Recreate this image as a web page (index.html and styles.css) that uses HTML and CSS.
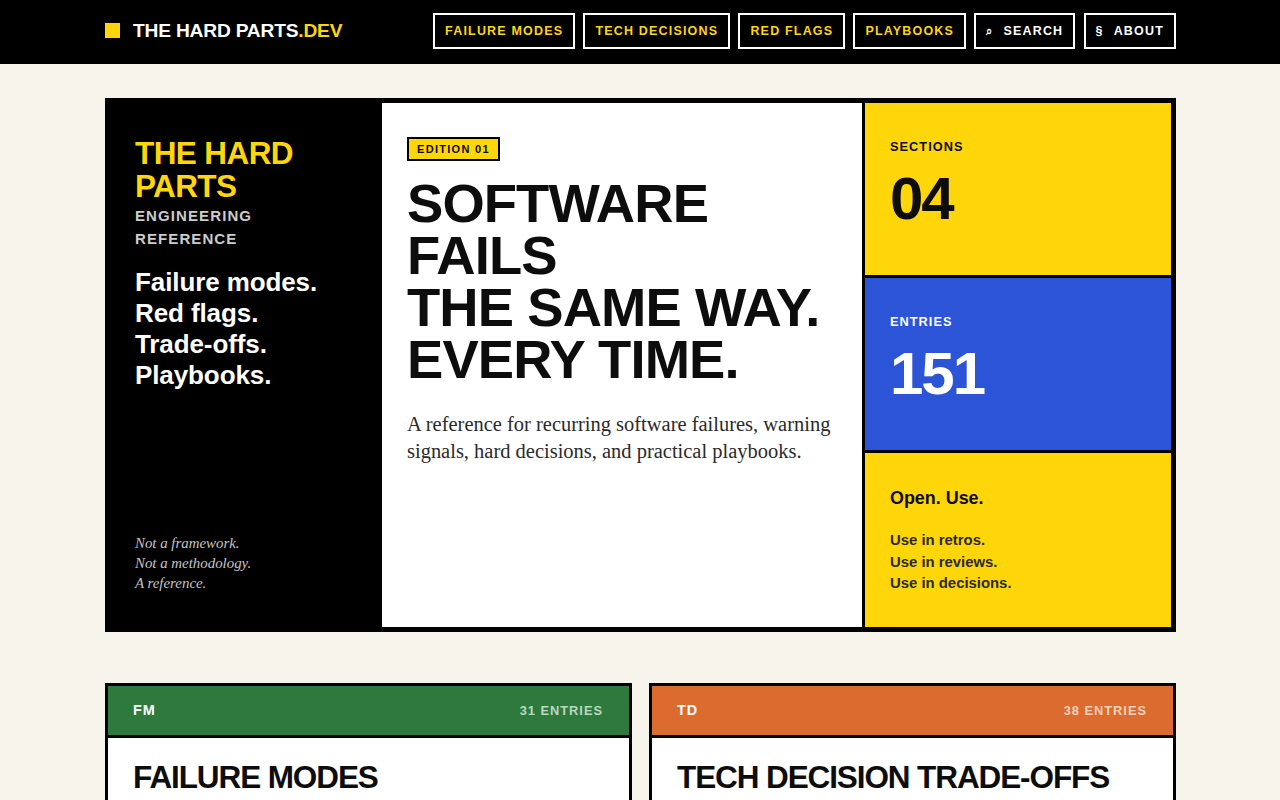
FILE: index.html
```html
<!DOCTYPE html>
<html lang="en">
<head>
    <meta charset="UTF-8">
    <title>The Hard Parts.dev</title>
    <link rel="stylesheet" href="styles.css">
</head>
<body>
    <header class="topbar">
        <div class="topbar-inner">
            <a class="brand" href="#"><span class="brand-mark"></span>THE HARD PARTS<span class="brand-dev">.DEV</span></a>
            <nav class="nav">
                <a class="nav-link" href="#">FAILURE MODES</a>
                <a class="nav-link" href="#">TECH DECISIONS</a>
                <a class="nav-link" href="#">RED FLAGS</a>
                <a class="nav-link" href="#">PLAYBOOKS</a>
                <a class="nav-link nav-plain" href="#"><span class="nav-icon search-icon">⌕</span>SEARCH</a>
                <a class="nav-link nav-plain" href="#"><span class="nav-icon">§</span>ABOUT</a>
            </nav>
        </div>
    </header>

    <main class="page">
        <section class="hero">
            <div class="hero-side">
                <div>
                    <h2 class="side-title">THE HARD PARTS</h2>
                    <p class="side-sub">ENGINEERING REFERENCE</p>
                    <p class="side-list">Failure modes.<br>Red flags.<br>Trade-offs.<br>Playbooks.</p>
                </div>
                <p class="side-note">Not a framework.<br>Not a methodology.<br>A reference.</p>
            </div>

            <div class="hero-main">
                <span class="edition">EDITION 01</span>
                <h1 class="headline">SOFTWARE FAILS<br>THE SAME WAY.<br>EVERY TIME.</h1>
                <p class="lede">A reference for recurring software failures, warning signals, hard decisions, and practical playbooks.</p>
            </div>

            <div class="hero-stats">
                <div class="stat stat-yellow">
                    <div class="stat-label">SECTIONS</div>
                    <div class="stat-num">04</div>
                </div>
                <div class="stat stat-blue">
                    <div class="stat-label">ENTRIES</div>
                    <div class="stat-num">151</div>
                </div>
                <div class="stat stat-yellow">
                    <div class="stat-open">Open. Use.</div>
                    <p class="stat-uses">Use in retros.<br>Use in reviews.<br>Use in decisions.</p>
                </div>
            </div>
        </section>

        <section class="cards">
            <article class="card">
                <div class="card-head card-green">
                    <span class="card-code">FM</span>
                    <span class="card-count">31 ENTRIES</span>
                </div>
                <div class="card-body">
                    <h3 class="card-title">FAILURE MODES</h3>
                </div>
            </article>
            <article class="card">
                <div class="card-head card-orange">
                    <span class="card-code">TD</span>
                    <span class="card-count">38 ENTRIES</span>
                </div>
                <div class="card-body">
                    <h3 class="card-title">TECH DECISION TRADE-OFFS</h3>
                </div>
            </article>
        </section>
    </main>
</body>
</html>
```

FILE: styles.css
```css
* {
    box-sizing: border-box;
}

body {
    margin: 0;
    background-color: #f7f4ec;
    color: #0d0d0d;
    font-family: "Liberation Sans", Arial, sans-serif;
}

a {
    text-decoration: none;
}

/* Top bar */
.topbar {
    background-color: #000;
    height: 64px;
}

.topbar-inner {
    display: flex;
    justify-content: space-between;
    align-items: center;
    height: 62px;
    margin-left: 105px;
    width: 1071px;
}

.brand {
    display: flex;
    align-items: center;
    color: #fff;
    font-size: 19.2px;
    font-weight: bold;
    letter-spacing: -0.2px;
}

.brand-mark {
    width: 15px;
    height: 15px;
    margin: 0 13px 1px 0;
    background-color: #ffd60a;
}

.brand-dev {
    color: #ffd60a;
}

.nav {
    display: flex;
    gap: 8.2px;
}

.nav-link {
    display: flex;
    align-items: center;
    height: 36px;
    padding: 0 10px;
    border: 2px solid #fff;
    color: #ffd60a;
    font-size: 12.48px;
    font-weight: bold;
    letter-spacing: 1.2px;
}

.nav-plain {
    color: #fff;
}

.nav-icon {
    margin-right: 10px;
}

.search-icon {
    font-size: 11px;
}

/* Hero */
.page {
    margin-left: 105px;
    width: 1071px;
    padding-top: 34px;
}

.hero {
    display: grid;
    grid-template-columns: 272px 483px 306px;
    height: 534px;
    border: 5px solid #000;
    background-color: #000;
}

.hero-side {
    display: flex;
    flex-direction: column;
    justify-content: space-between;
    padding: 34px 25px;
    background-color: #000;
    color: #fff;
}

.side-title {
    margin: 0;
    color: #ffd60a;
    font-size: 31.5px;
    line-height: 33px;
    letter-spacing: -0.6px;
}

.side-sub {
    margin: 0;
    padding-top: 1px;
    color: #ccc;
    font-size: 15px;
    font-weight: bold;
    line-height: 23px;
    letter-spacing: 1.1px;
}

.side-list {
    margin: 17px 0 0;
    font-size: 26px;
    font-weight: bold;
    line-height: 31px;
    letter-spacing: -0.1px;
}

.side-note {
    margin: 0;
    color: #c4c4c4;
    font-family: "Liberation Serif", serif;
    font-size: 14.88px;
    font-style: italic;
    line-height: 20px;
}

.hero-main {
    padding: 34px 25px;
    background-color: #fff;
    border-right: 3px solid #000;
}

.edition {
    display: inline-block;
    padding: 4px 8px;
    border: 2px solid #000;
    background-color: #ffd60a;
    font-size: 11px;
    font-weight: bold;
    letter-spacing: 1.3px;
}

.headline {
    margin: 17px 0 0;
    font-size: 54.4px;
    line-height: 52px;
    letter-spacing: -0.9px;
}

.lede {
    margin: 25px 0 0;
    color: #2a2a2a;
    font-family: "Liberation Serif", serif;
    font-size: 20.48px;
    line-height: 27px;
}

.hero-stats {
    display: grid;
    grid-template-rows: 172px 172px 174px;
    row-gap: 3px;
}

.stat {
    padding: 36px 25px;
}

.stat-yellow {
    background-color: #ffd60a;
}

.stat-blue {
    background-color: #2b55d6;
    color: #fff;
}

.stat-label {
    font-size: 12.8px;
    font-weight: bold;
    line-height: 15px;
    letter-spacing: 1px;
}

.stat-num {
    margin-top: 9px;
    font-size: 60px;
    font-weight: bold;
    line-height: 72px;
    letter-spacing: -2px;
}

.stat-open {
    margin-top: -1px;
    font-size: 17.92px;
    font-weight: bold;
    line-height: 20px;
}

.stat-uses {
    margin: 22px 0 0;
    color: #2a2a2a;
    font-size: 14.88px;
    font-weight: bold;
    line-height: 21.5px;
}

/* Section cards */
.cards {
    display: grid;
    grid-template-columns: 527px 527px;
    column-gap: 17px;
    margin-top: 51px;
}

.card {
    border: 3px solid #000;
    background-color: #fff;
}

.card-head {
    display: flex;
    justify-content: space-between;
    align-items: center;
    height: 52px;
    padding: 0 26px 1px 25px;
    border-bottom: 3px solid #000;
}

.card-green {
    background-color: #2e7a3c;
}

.card-orange {
    background-color: #db6b2f;
}

.card-code {
    color: #fff;
    font-size: 14.4px;
    font-weight: bold;
    letter-spacing: 1px;
}

.card-count {
    color: rgba(255, 255, 255, 0.7);
    font-size: 12.8px;
    font-weight: bold;
    letter-spacing: 1px;
}

.card-body {
    height: 200px;
    padding: 21px 25px;
}

.card-title {
    margin: 0;
    font-size: 31.5px;
    line-height: 36px;
    letter-spacing: -1.1px;
}
```
